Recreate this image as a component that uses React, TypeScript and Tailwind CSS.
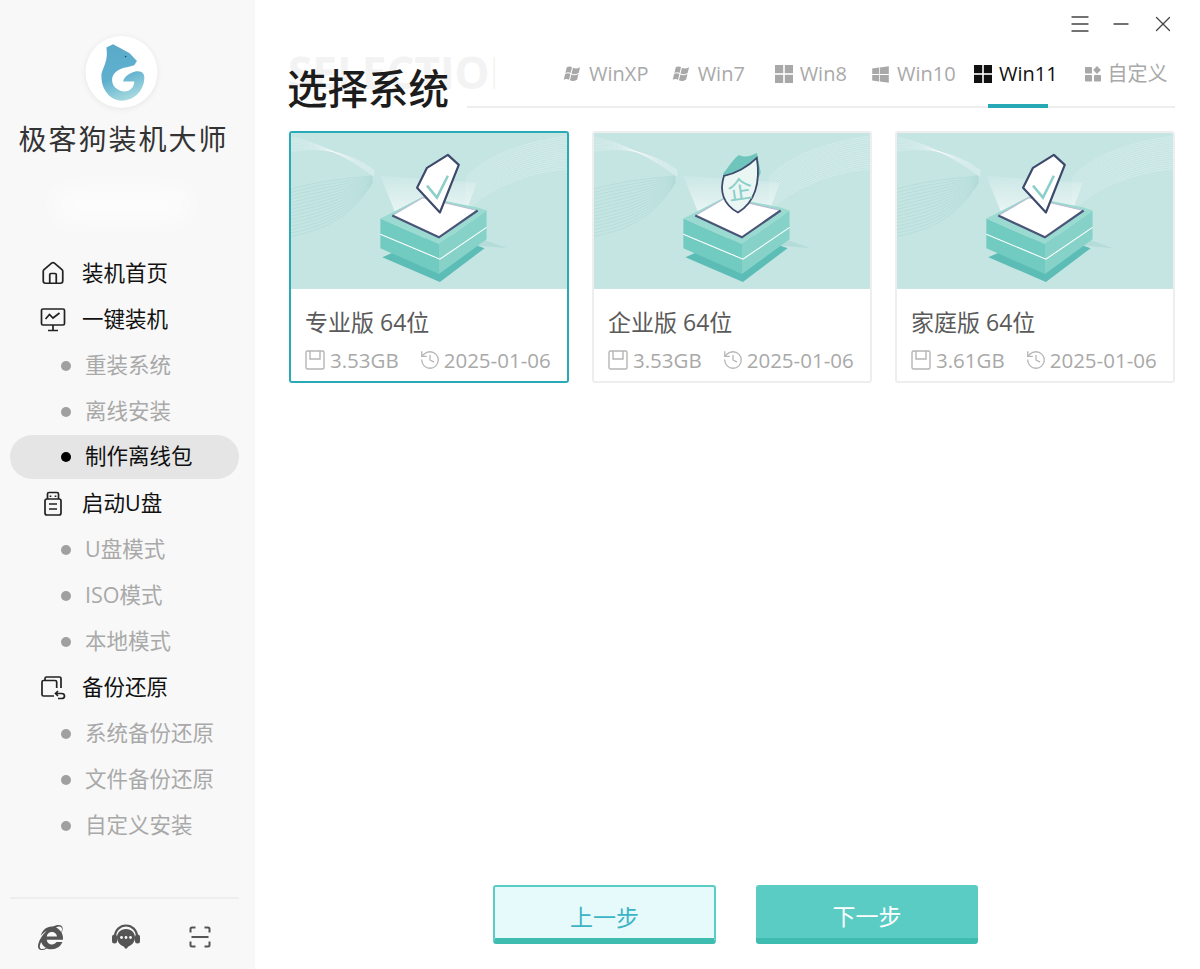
import { useId } from "react";
import { FaInternetExplorer, FaWindows } from "react-icons/fa";
import { House, History, Menu, Minus, X } from "lucide-react";

function Logo() {
  const id = useId();
  return (
    <svg viewBox="255 108 217 217" className="w-full h-full">
      <defs>
        <linearGradient id={id} x1="0.3" y1="0" x2="0.6" y2="1">
          <stop offset="0" stopColor="#5aa9c9" />
          <stop offset="0.55" stopColor="#5fb0cf" />
          <stop offset="1" stopColor="#a9dbe0" />
        </linearGradient>
      </defs>
      <path
        fill={`url(#${id})`}
        d="M318 143 L338 133 L362 146 L388 160 L410 183 L402 196 L380 202 C355 205 335 220 335 240 C335 262 355 275 372 275 C390 275 402 262 402 245 L368 245 C372 232 385 220 405 215 C425 212 435 222 432 240 C428 280 395 303 365 303 C330 303 303 270 303 230 C303 205 325 190 318 143 Z"
      />
      <circle cx="376" cy="170" r="2.5" fill="#1f4d66" />
    </svg>
  );
}

function MonitorIcon() {
  return (
    <svg viewBox="0 0 26 26" className="w-[26px] h-[26px]" fill="none" stroke="#222" strokeWidth="1.7">
      <rect x="1.5" y="2" width="23" height="16" rx="1.5" />
      <path d="M5.5 12 L9.5 7.5 L13 11 L19.5 6" />
      <path d="M13 18 V23 M8 23.5 H18" />
    </svg>
  );
}

function UsbIcon() {
  return (
    <svg viewBox="0 0 26 26" className="w-[26px] h-[26px]" fill="none" stroke="#222" strokeWidth="1.7">
      <path d="M7.5 8 V3 Q7.5 1.5 9 1.5 H17 Q18.5 1.5 18.5 3 V8" />
      <rect x="5" y="8" width="16" height="16" rx="2" />
      <path d="M10.5 4.5 V6 M15.5 4.5 V6 M9 13 H17 M9 18 H17" />
    </svg>
  );
}

function BackupIcon() {
  return (
    <svg viewBox="0 0 26 26" className="w-[26px] h-[26px]" fill="none" stroke="#222" strokeWidth="1.7">
      <path d="M5 5 V3.5 Q5 2 6.5 2 H19.5 Q21 2 21 3.5 V13" />
      <path d="M14 21 H3.5 Q2 21 2 19.5 V7 Q2 5.5 3.5 5.5 H15 Q16.7 5.5 16.7 7 V13" />
      <path d="M18 16 L15.5 18.5 L18 21 M15.5 18.5 H21.5 Q24.5 18.5 24.5 21 Q24.5 23.5 21.5 23.5 H18" />
    </svg>
  );
}

function HeadsetIcon() {
  return (
    <svg viewBox="0 0 30 30" className="w-[30px] h-[30px]">
      <path d="M4 15 C4 8 9 3.5 15 3.5 C21 3.5 26 8 26 15" fill="none" stroke="#555" strokeWidth="2.2" />
      <rect x="1" y="12.5" width="5" height="9" rx="2.5" fill="#555" />
      <rect x="24" y="12.5" width="5" height="9" rx="2.5" fill="#555" />
      <path d="M15 7 C9.5 7 6 11 6 15.5 C6 20 9.5 23.5 12 24 L15 27 L18 24 C20.5 23.5 24 20 24 15.5 C24 11 20.5 7 15 7 Z" fill="#555" />
      <circle cx="10.5" cy="15.5" r="1.4" fill="#f8f8f8" />
      <circle cx="15" cy="15.5" r="1.4" fill="#f8f8f8" />
      <circle cx="19.5" cy="15.5" r="1.4" fill="#f8f8f8" />
    </svg>
  );
}

function ScanIcon() {
  return (
    <svg viewBox="0 0 22 22" className="w-[22px] h-[22px]" fill="none" stroke="#555" strokeWidth="2">
      <path d="M1.5 6.5 V3 Q1.5 1.5 3 1.5 H6.5 M15.5 1.5 H19 Q20.5 1.5 20.5 3 V6.5 M20.5 15.5 V19 Q20.5 20.5 19 20.5 H15.5 M6.5 20.5 H3 Q1.5 20.5 1.5 19 V15.5 M2.5 11 H19.5" />
    </svg>
  );
}

function FloppyIcon() {
  return (
    <svg viewBox="0 0 20 20" className="w-5 h-5" fill="none" stroke="#b5b5b5" strokeWidth="1.4">
      <rect x="1" y="1" width="18" height="18" rx="1.5" />
      <path d="M5 1 V9 H15 V1" />
    </svg>
  );
}

function XpFlag({ color }: { color: string }) {
  return (
    <svg viewBox="0 0 20 18" className="w-[19px] h-[18px]" fill={color}>
      <path d="M4 2 C6 .5 8 .8 9.5 2 L8 8 C6.5 7 4.5 6.8 2.5 8 Z" />
      <path d="M10.5 2.5 C12.5 3.6 15 3.6 18 2 L16.5 8 C13.5 9.5 11 9.5 9 8.6 Z" />
      <path d="M2.2 9 C4.2 7.9 6.2 8 7.8 9 L6.3 15 C4.6 14 2.8 14 .8 15 Z" />
      <path d="M8.8 9.6 C10.8 10.6 13.4 10.6 16.2 9 L14.8 15 C11.8 16.6 9.5 16.6 7.3 15.6 Z" />
    </svg>
  );
}

function SquaresIcon({ color }: { color: string }) {
  return (
    <svg viewBox="0 0 18 18" className="w-[18px] h-[18px]" fill={color}>
      <rect x="0" y="0" width="8.2" height="8.2" />
      <rect x="9.8" y="0" width="8.2" height="8.2" />
      <rect x="0" y="9.8" width="8.2" height="8.2" />
      <rect x="9.8" y="9.8" width="8.2" height="8.2" />
    </svg>
  );
}

function CustomIcon() {
  return (
    <svg viewBox="0 0 16 16" className="w-4 h-4" fill="#a8a8a8">
      <rect x="0" y="1" width="7" height="6.4" rx="0.6" />
      <path d="M12 0 L15.8 4 L12 8 L8.2 4 Z" />
      <rect x="0" y="9" width="7" height="6.4" rx="0.6" />
      <rect x="9" y="9" width="7" height="6.4" rx="0.6" />
    </svg>
  );
}

const leftWaves = Array.from({ length: 15 }, (_, i) => i);
const topWaves = Array.from({ length: 9 }, (_, i) => i);
const rightWaves = Array.from({ length: 16 }, (_, i) => i);

function Illustration({ kind }: { kind: "check" | "shield" }) {
  const id = useId();
  return (
    <svg viewBox="0 0 278 157" className="w-full h-full block">
      <defs>
        <linearGradient id={id} x1="0" y1="0" x2="0" y2="1">
          <stop offset="0" stopColor="#fff" stopOpacity="0.1" />
          <stop offset="1" stopColor="#fff" stopOpacity="0.7" />
        </linearGradient>
      </defs>
      <rect width="278" height="157" fill="#c5e5e3" />
      <g fill="none" strokeWidth="0.6">
        {leftWaves.map((i) => (
          <path key={i} stroke="#acd9d5" d={`M0 ${104 - i * 3.4} C30 ${98 - i * 3.6} 58 ${88 - i * 3} 82 ${50 - i * 0.5}`} />
        ))}
        {topWaves.map((i) => (
          <path key={i} stroke="#ffffff" strokeOpacity="0.4" d={`M84 ${44 - i * 0.8} C60 ${26 - i * 0.8} 30 ${10 + i * 0.4} 0 ${4 + i * 1.8}`} />
        ))}
        {rightWaves.map((i) => (
          <path key={i} stroke="#ffffff" strokeOpacity="0.45" d={`M176 ${78 - i * 2.2} C200 ${56 - i * 2.4} 235 ${40 - i * 2} 278 ${36 - i * 2.2}`} />
        ))}
      </g>
      <path d="M90 43 L187 50 L178 75 L107 85 Z" fill={`url(#${id})`} />
      <path d="M150 110 L218 116 L190 106 Z" fill="#b5dcd9" />
      <path d="M92 125 L150 150 L195 116 L150 100 Z" fill="#5cbcb6" />
      <path d="M90 86 L149 112 V142 L90 116 Z" fill="#72cbc0" />
      <path d="M197 78 L149 112 V142 L197 107 Z" fill="#86d2c8" />
      <path d="M90 86 L102 80 L133 64 L188 75 L197 78 L149 112 Z" fill="#9adad0" />
      <path d="M90 102 L150 127 L197 95" fill="none" stroke="#fff" strokeWidth="1.1" />
      <path d="M102 83 L133 65 L188 78 L149 105 Z" fill="#fff" />
      <path d="M102 83 L133 65 L188 78" fill="none" stroke="#b9bdd0" strokeWidth="1.2" />
      <path d="M102 83 L149 105 L188 78" fill="none" stroke="#4a5578" strokeWidth="2.2" />
      {kind === "check" ? (
        <g>
          <path d="M158 22 L169 32 L150 80 L127 55 L137 35 Z" fill="#fff" stroke="#3e4a6c" strokeWidth="2.2" strokeLinejoin="round" />
          <path d="M137 53 L147 65 L158 43" fill="none" stroke="#8ccfc8" strokeWidth="2.6" />
        </g>
      ) : (
        <g>
          <path d="M130 41 C135 35 140 26 146 22 C152 25 158 23 164 20 L168 40 L150 76 L132 60 Z" fill="#6fc4bb" />
          <path d="M131 43 C142 41 155 34 164 25 C168 50 162 70 145 80 C130 72 126 58 131 43 Z" fill="#e9f6f4" stroke="#3e4a6c" strokeWidth="1.8" />
          <text x="147" y="66" textAnchor="middle" fontSize="25" fill="#8ccfc8" fontFamily="'Noto Sans CJK SC', sans-serif" transform="rotate(-8 147 57)">企</text>
        </g>
      )}
    </svg>
  );
}

function SysCard({ title, size, kind, active }: { title: string; size: string; kind: "check" | "shield"; active?: boolean }) {
  return (
    <div className={active ? "w-[280px] h-[252px] rounded-[3px] border-2 border-[#2aa9b6] bg-white overflow-hidden" : "w-[280px] h-[252px] rounded-[3px] border-2 border-[#eeeeee] bg-white overflow-hidden"}>
      <div className="h-[156px]">
        <Illustration kind={kind} />
      </div>
      <div className="pl-[14px] pt-[17px]">
        <div className="text-[23px] leading-[32px] text-[#5a5a5a]">{title}</div>
        <div className="flex items-center mt-[8px] text-[20.5px] leading-[28px] text-[#a9a9a9]">
          <FloppyIcon />
          <span className="ml-[5px]">{size}</span>
          <History size={22} strokeWidth={1.4} color="#b5b5b5" className="ml-[20px]" />
          <span className="ml-[3px]">2025-01-06</span>
        </div>
      </div>
    </div>
  );
}

function NavMain({ icon, label }: { icon: React.ReactNode; label: string }) {
  return (
    <div className="h-[46px] flex items-center pl-10 text-[21.5px] text-[#111]">
      <span className="w-[26px] flex justify-center">{icon}</span>
      <span className="ml-4">{label}</span>
    </div>
  );
}

function NavSub({ label, active }: { label: string; active?: boolean }) {
  return (
    <div className={active ? "h-[44px] mb-[2px] ml-[10px] mr-[16px] pl-[51px] rounded-full bg-[#e5e5e5] flex items-center text-[21.5px] text-[#111]" : "h-[46px] pl-[61px] flex items-center text-[21.5px] text-[#a9a9a9]"}>
      <span className={active ? "w-[10px] h-[10px] rounded-full bg-black" : "w-[10px] h-[10px] rounded-full bg-[#a0a0a0]"} />
      <span className="ml-[14px]">{label}</span>
    </div>
  );
}

const tabs = [
  { label: "WinXP", icon: <XpFlag color="#a8a8a8" /> },
  { label: "Win7", icon: <XpFlag color="#a8a8a8" /> },
  { label: "Win8", icon: <SquaresIcon color="#a8a8a8" /> },
  { label: "Win10", icon: <FaWindows size={19} color="#a8a8a8" /> },
  { label: "Win11", icon: <SquaresIcon color="#111" />, active: true },
];

export default function App() {
  return (
    <div className="w-[1200px] h-[969px] flex overflow-hidden bg-white font-['Open_Sans','Noto_Sans_CJK_SC',sans-serif]">
      <aside className="w-[255px] h-full bg-[#f8f8f8] flex flex-col shrink-0">
        <div className="pt-9 flex flex-col items-center">
          <div className="w-[72px] h-[72px] rounded-full bg-white shadow-[0_1px_6px_rgba(0,0,0,0.08)] -translate-x-[6.5px]">
            <Logo />
          </div>
          <div className="mt-[11px] h-10 leading-10 text-[28px] tracking-[2px] text-[#333] whitespace-nowrap -translate-x-[4px]">极客狗装机大师</div>
        </div>
        <div className="h-[91.5px] flex items-center justify-center">
          <div className="w-[140px] h-[36px] rounded-full bg-white/60 blur-md -translate-x-[6px]" />
        </div>
        <nav>
          <NavMain icon={<House size={29} strokeWidth={1.6} color="#222" />} label="装机首页" />
          <NavMain icon={<MonitorIcon />} label="一键装机" />
          <NavSub label="重装系统" />
          <NavSub label="离线安装" />
          <NavSub label="制作离线包" active />
          <NavMain icon={<UsbIcon />} label="启动U盘" />
          <NavSub label="U盘模式" />
          <NavSub label="ISO模式" />
          <NavSub label="本地模式" />
          <NavMain icon={<BackupIcon />} label="备份还原" />
          <NavSub label="系统备份还原" />
          <NavSub label="文件备份还原" />
          <NavSub label="自定义安装" />
        </nav>
        <div className="mt-auto ml-[10px] mr-[16px] mb-[11px] h-[61px] border-t-2 border-[#eeeeee] flex items-center justify-between pl-[28px] pr-[28px] pt-[17px]">
          <FaInternetExplorer size={25} color="#555" />
          <HeadsetIcon />
          <ScanIcon />
        </div>
      </aside>

      <main className="flex-1 flex flex-col pl-[34px] pr-[25px]">
        <div className="h-[46px] flex items-center justify-end gap-[17px] -mr-[1px] pt-[1px]">
          <Menu size={24} strokeWidth={1.4} color="#444" />
          <Minus size={24} strokeWidth={1.4} color="#444" />
          <X size={26} strokeWidth={1.2} color="#444" />
        </div>
        <div className="flex items-end h-[62px] relative">
          <div className="absolute -left-[1px] top-[3px] w-[207px] overflow-hidden text-[44px] leading-[46px] font-bold text-[#f3f3f3] whitespace-nowrap">SELECTION</div>
          <h1 className="relative w-[180px] shrink-0 -ml-[2px] text-[40.5px] leading-[50px] font-medium text-[#1c1c1c] -mb-[6px]">选择系统</h1>
          <div className="flex-1 h-[60px] flex items-center justify-end border-b-2 border-[#eeeeee]">
            {tabs.map((t) => (
              <div key={t.label} className={t.active ? "relative w-[102.5px] h-full pb-[6px] flex items-center justify-center gap-[7px] text-[20px] text-[#111]" : "relative w-[102.5px] h-full pb-[6px] flex items-center justify-center gap-[7px] text-[20px] text-[#a9a9a9]"}>
                {t.icon}
                <span>{t.label}</span>
                {t.active && <span className="absolute -bottom-[2px] left-[23px] w-[60px] h-1 bg-[#27a9b5]" />}
              </div>
            ))}
            <div className="ml-[10px] w-[98px] h-full pb-[6px] flex items-center justify-center gap-[7px] text-[20px] text-[#a9a9a9]">
              <CustomIcon />
              <span>自定义</span>
            </div>
          </div>
        </div>
        <div className="flex gap-[23px] mt-[23px]">
          <SysCard title="专业版 64位" size="3.53GB" kind="check" active />
          <SysCard title="企业版 64位" size="3.53GB" kind="shield" />
          <SysCard title="家庭版 64位" size="3.61GB" kind="check" />
        </div>
        <div className="mt-auto mb-[25px] flex justify-center gap-10 pl-[7px]">
          <button className="w-[223px] h-[59px] pt-[9px] rounded-[3px] border-2 border-b-[6px] border-[#5accc4] border-b-[#3fbcb0] bg-[#e6fafc] text-[23px] text-[#3cb4c4]">上一步</button>
          <button className="w-[222px] h-[59px] pt-[9px] rounded-[3px] border-b-[6px] border-[#3fbcb0] bg-[#5accc4] text-[23px] text-white">下一步</button>
        </div>
      </main>
    </div>
  );
}
